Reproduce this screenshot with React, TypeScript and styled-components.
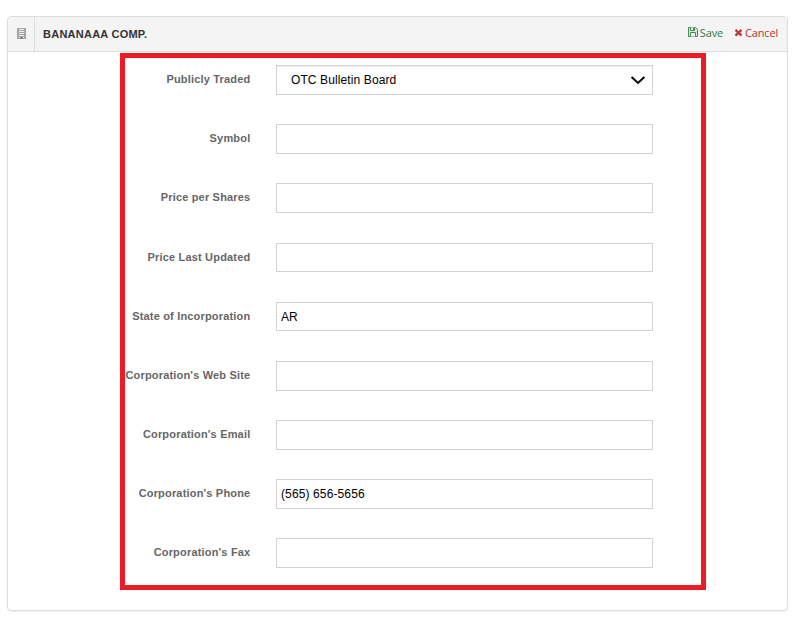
import React from 'react';
import styled, { createGlobalStyle } from 'styled-components';

const GlobalStyle = createGlobalStyle`
  * { box-sizing: border-box; }
  body {
    margin: 0;
    background: #fff;
    font-family: 'Liberation Sans', Arial, sans-serif;
  }
`;

const Page = styled.main`
  height: 621px;
  padding: 16px 12px 10px 7px;
  overflow: hidden;
`;

const Panel = styled.section`
  height: 595px;
  border: 1px solid #dcdcdc;
  border-radius: 4px;
  box-shadow: 0 1px 1px rgba(0, 0, 0, 0.06);
  background: #fff;
`;

const PanelHeader = styled.header`
  display: flex;
  height: 35px;
  background: #f4f4f4;
  border-bottom: 1px solid #dcdcdc;
  border-radius: 3px 3px 0 0;
`;

const IconCell = styled.div`
  width: 27px;
  padding: 10px 0 0 8px;
  border-right: 1px solid #dcdcdc;
  svg { display: block; }
`;

const Title = styled.h1`
  flex: 1;
  margin: 0;
  padding-left: 8px;
  font-size: 11px;
  font-weight: 700;
  line-height: 35px;
  letter-spacing: 0.25px;
  color: #333;
`;

const Actions = styled.div`
  display: flex;
  gap: 11px;
  padding-right: 9px;
`;

const Action = styled.button<{ $tone: string; $gap: number }>`
  display: flex;
  align-items: center;
  gap: ${(p) => p.$gap}px;
  height: 30px;
  padding: 0;
  border: 0;
  background: none;
  color: ${(p) => p.$tone};
  font: 11px/29px 'Open Sans', sans-serif;
  letter-spacing: -0.17px;
`;

const Form = styled.form`
  width: 586px;
  height: 537px;
  margin: 1px 0 0 112px;
  padding-top: 7.2px;
  border: 5px solid #ed1c24;
`;

const Row = styled.div`
  display: flex;
  height: 59.125px;
`;

const Label = styled.label`
  width: 125.4px;
  margin-right: 25.6px;
  text-align: right;
  white-space: nowrap;
  font-size: 11px;
  font-weight: 700;
  line-height: 28.2px;
  letter-spacing: 0.18px;
  color: #666;
`;

const Control = styled.input`
  width: 377px;
  height: 29.75px;
  padding: 0 4px;
  border: 1px solid #d2d2d2;
  border-radius: 0;
  background: #fff;
  font: 12px 'Liberation Sans', Arial, sans-serif;
  letter-spacing: 0.12px;
  color: #000;
  outline: none;
`;

const SelectBox = styled.div`
  display: flex;
  align-items: center;
  justify-content: space-between;
  width: 377px;
  height: 29.75px;
  padding: 0 6px 0 14px;
  border: 1px solid #d2d2d2;
  box-shadow: inset 0 1px 1px rgba(0, 0, 0, 0.05);
  font-size: 12px;
  letter-spacing: 0.11px;
  color: #000;
`;

const BuildingIcon = () => (
  <svg width="11" height="13" viewBox="0 0 11 13">
    <path fill="#a6a6a6" d="M1 1h9v11H1z" />
    <path fill="#eee" d="M3 2h5v1H3zM3 4h5v1H3zM3 6h5v1H3zM3 8h5v1H3zM3 10h1v1H3zM7 10h1v1H7z" />
    <path fill="#777" d="M4.5 10h2v2h-2z" />
  </svg>
);

const SaveIcon = () => (
  <svg width="10" height="10" viewBox="0 0 10 10" fill="none" stroke="#3f8a55">
    <path fill="#dcebdd" d="M.5.5h7l2 2v7h-9z" />
    <path fill="#f4f4f4" d="M2.5.5v3h4v-3M2.5 9.5v-4h5v4" />
    <path d="M5.5 1v2" />
  </svg>
);

const CancelIcon = () => (
  <svg width="9" height="9" viewBox="0 0 9 9">
    <path d="M1.5 1.8l6 5.8M7.5 1.8L1.5 7.6" stroke="#b93a3e" strokeWidth="2.4" />
  </svg>
);

const Chevron = () => (
  <svg width="16" height="10" viewBox="0 0 16 10">
    <path d="M1.6 2L8 8l6.4-6" fill="none" stroke="#000" strokeWidth="2" />
  </svg>
);

const fields = [
  { label: 'Symbol', value: '' },
  { label: 'Price per Shares', value: '' },
  { label: 'Price Last Updated', value: '' },
  { label: 'State of Incorporation', value: 'AR' },
  { label: "Corporation's Web Site", value: '' },
  { label: "Corporation's Email", value: '' },
  { label: "Corporation's Phone", value: '(565) 656-5656' },
  { label: "Corporation's Fax", value: '' },
];

export default function App() {
  return (
    <Page>
      <GlobalStyle />
      <Panel>
        <PanelHeader>
          <IconCell><BuildingIcon /></IconCell>
          <Title>BANANAAA COMP.</Title>
          <Actions>
            <Action type="button" $tone="#2c7b3d" $gap={2}><SaveIcon />Save</Action>
            <Action type="button" $tone="#c0302b" $gap={2}><CancelIcon />Cancel</Action>
          </Actions>
        </PanelHeader>
        <Form>
          <Row>
            <Label>Publicly Traded</Label>
            <SelectBox>OTC Bulletin Board<Chevron /></SelectBox>
          </Row>
          {fields.map((f) => (
            <Row key={f.label}>
              <Label htmlFor={f.label}>{f.label}</Label>
              <Control id={f.label} defaultValue={f.value} />
            </Row>
          ))}
        </Form>
      </Panel>
    </Page>
  );
}
